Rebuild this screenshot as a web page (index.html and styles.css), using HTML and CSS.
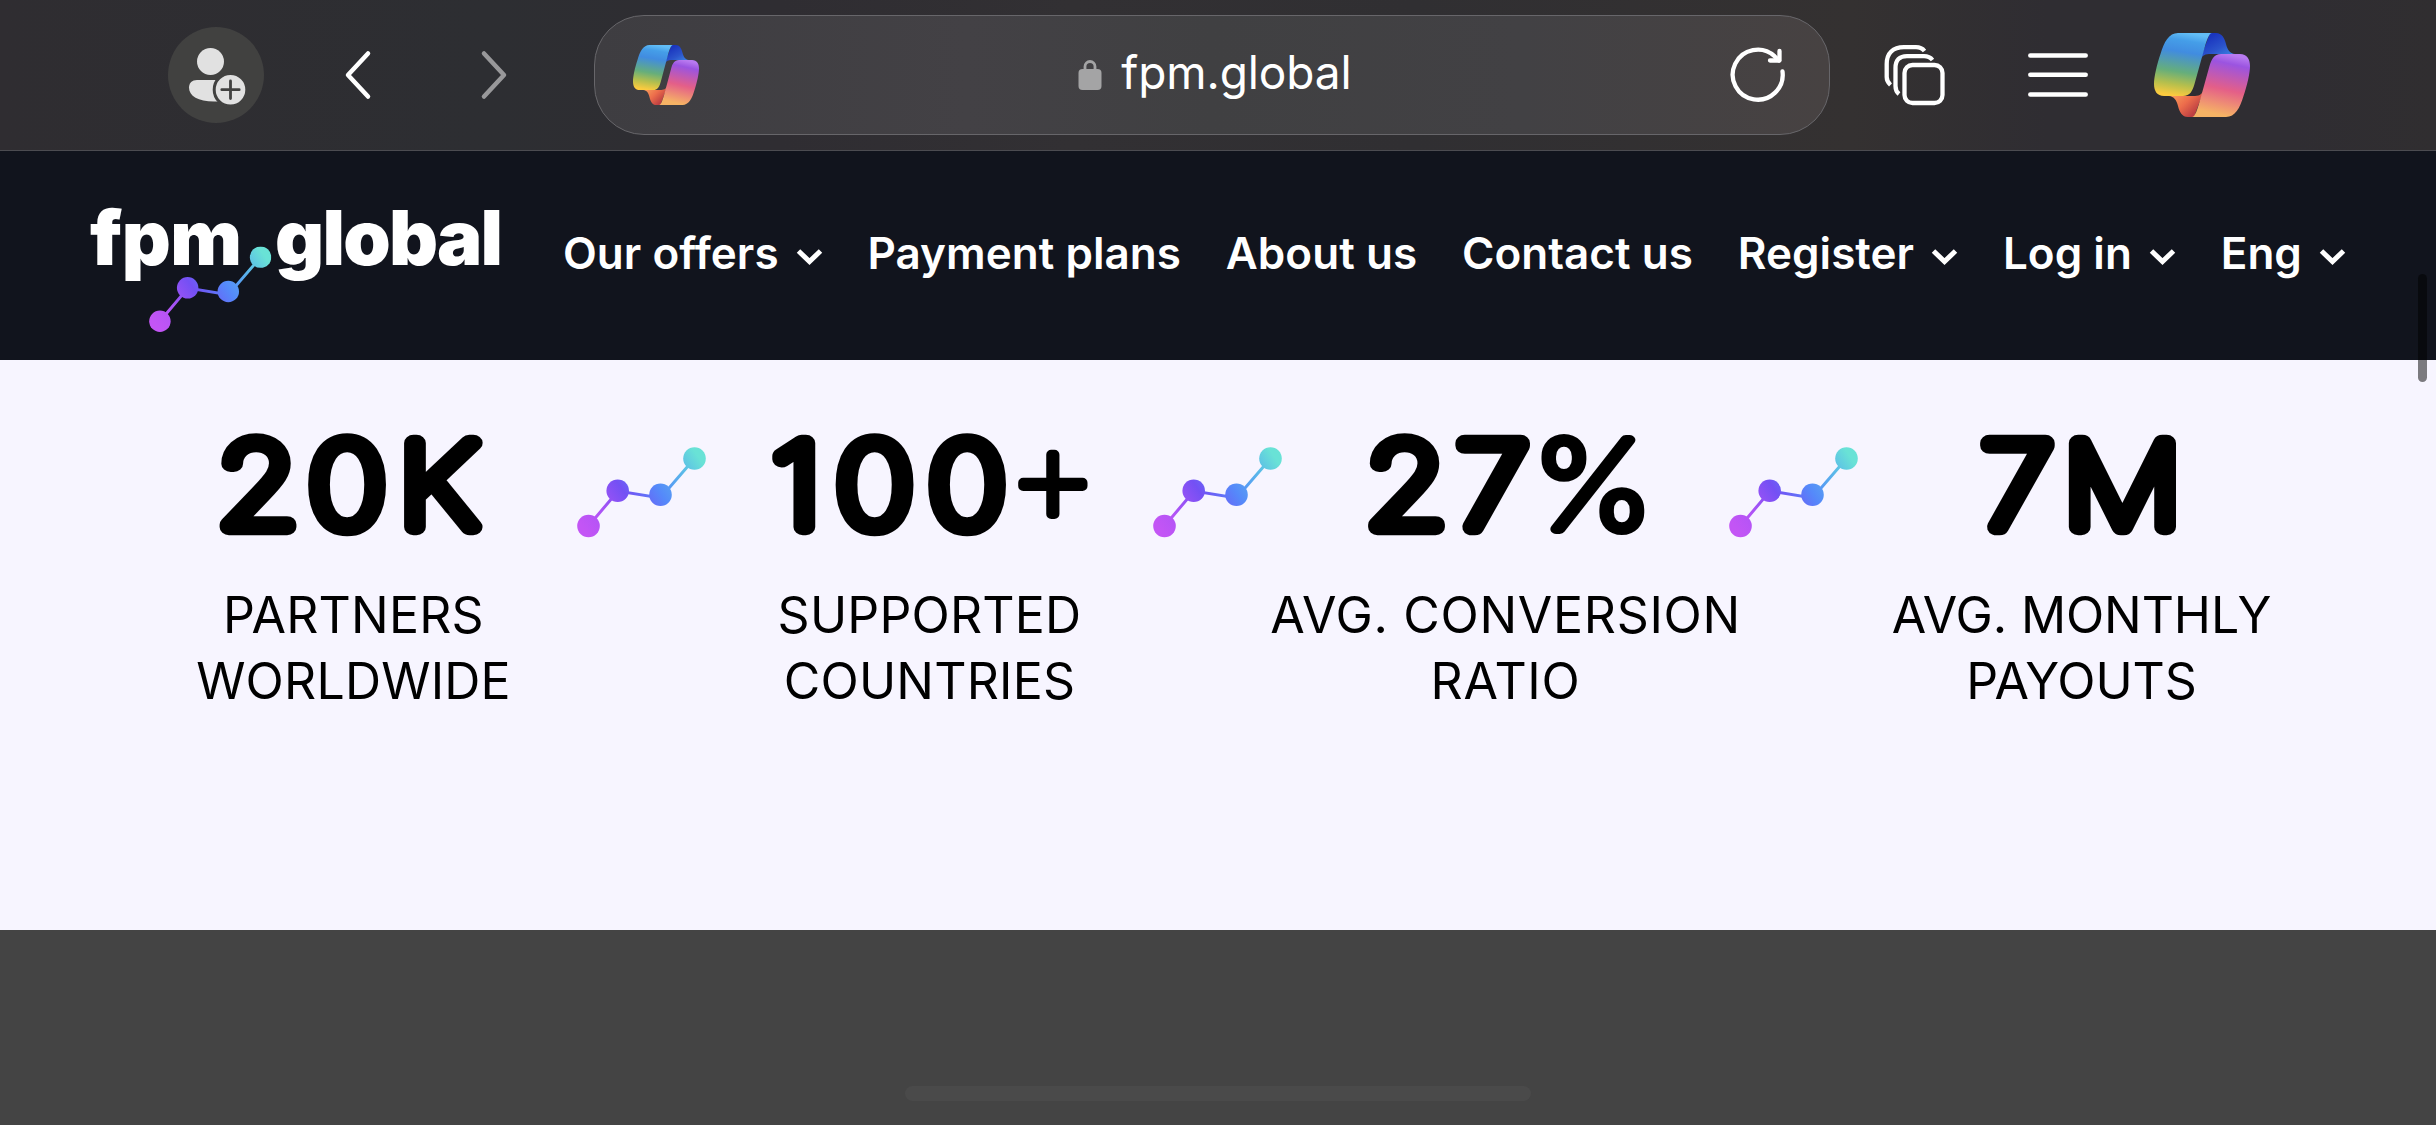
FILE: index.html
```html
<!DOCTYPE html>
<html lang="en">
<head>
  <meta charset="UTF-8">
  <meta name="viewport" content="width=device-width, initial-scale=1.0">
  <title>fpm.global</title>
  <link rel="stylesheet" href="styles.css">
</head>
<body>
  <!-- shared shapes -->
  <svg class="defs" width="0" height="0">
    <defs>
      <linearGradient id="ribbonCool" x1="0.55" y1="0" x2="0.4" y2="1">
        <stop offset="0" stop-color="#62bdf6"/>
        <stop offset="0.12" stop-color="#459ee8"/>
        <stop offset="0.3" stop-color="#418ce0"/>
        <stop offset="0.62" stop-color="#66ae7b"/>
        <stop offset="0.82" stop-color="#b5bf4d"/>
        <stop offset="1" stop-color="#fccb3f"/>
      </linearGradient>
      <linearGradient id="foldCool" x1="0.2" y1="0.2" x2="0.8" y2="1">
        <stop offset="0" stop-color="#1a35bf"/>
        <stop offset="0.5" stop-color="#2b54cb"/>
        <stop offset="1" stop-color="#3f8be6"/>
      </linearGradient>
      <linearGradient id="ribbonWarm" x1="0.6" y1="0" x2="0.4" y2="1">
        <stop offset="0" stop-color="#b87af0"/>
        <stop offset="0.14" stop-color="#9b54e0"/>
        <stop offset="0.55" stop-color="#e45f88"/>
        <stop offset="0.95" stop-color="#f6b365"/>
      </linearGradient>
      <linearGradient id="foldWarm" x1="0.1" y1="0.1" x2="0.85" y2="0.7">
        <stop offset="0" stop-color="#f8a15c"/>
        <stop offset="0.55" stop-color="#ec6c4b"/>
        <stop offset="1" stop-color="#bd3f42"/>
      </linearGradient>
      <symbol id="copilot" viewBox="0 0 96 84" preserveAspectRatio="none">
        <path fill="url(#foldCool)" d="M56 0H62C68 0 70.500 5 72 11C73.500 17 76 20.500 81 21H57C51 21 48.500 22 46 27Z"/>
        <path fill="url(#foldWarm)" d="M40 84H34C28 84 25.500 79 24 73C22.500 67 20 63.500 15 63H39C45 63 47.500 62 50 57Z"/>
        <path fill="url(#ribbonCool)" d="M24 0H58C55 0 52.500 8 50.500 15L40.500 51C38.500 58 36 63 29 63H10C3 63 0 58 0 51C0 44 3 31 6.500 21C10 9 15 0 24 0Z"/>
        <path fill="url(#ribbonWarm)" d="M72 84H38C41 84 43.500 76 45.500 69L55.500 33C57.500 26 60 21 67 21H86C93 21 96 26 96 33C96 40 93 53 89.500 63C86 75 81 84 72 84Z"/>
      </symbol>
      <linearGradient id="line" gradientUnits="userSpaceOnUse" x1="8" y1="84" x2="120" y2="8">
        <stop offset="0" stop-color="#c355f5"/>
        <stop offset="0.15" stop-color="#b354f6"/>
        <stop offset="0.4" stop-color="#7450f4"/>
        <stop offset="0.62" stop-color="#5589fa"/>
        <stop offset="0.85" stop-color="#5bbbe8"/>
        <stop offset="1" stop-color="#69e2d6"/>
      </linearGradient>
      <symbol id="graph" viewBox="0 0 129 92">
        <path d="M11.500 79L41 44L83.500 51L117.500 11.500" fill="none" stroke="url(#line)" stroke-width="3"/>
        <g fill="url(#line)">
          <circle cx="11.500" cy="79" r="11.300"/>
          <circle cx="40.700" cy="43.800" r="11.300"/>
          <circle cx="83.500" cy="47.700" r="11.300"/>
          <circle cx="117.500" cy="11.500" r="11.300"/>
        </g>
      </symbol>
      <symbol id="chevron" viewBox="0 0 27 18">
        <path d="M2.500 3L13.500 13.500L24.500 3" fill="none" stroke="#fff" stroke-width="5"/>
      </symbol>
    </defs>
  </svg>

  <header class="browser">
    <div class="avatar">
      <svg width="96" height="96" viewBox="0 0 96 96">
        <g fill="#e1e1e1">
          <circle cx="42.500" cy="34.500" r="13.500"/>
          <path d="M29 53H55V74.500H46C30 74.500 21 69 21 60.500C21 56 24 53 29 53Z"/>
          <circle cx="62.500" cy="62.700" r="16.300" stroke="#414140" stroke-width="3"/>
        </g>
        <path d="M62.500 54V71.500M53.800 62.700H71.200" stroke="#414140" stroke-width="2.800" stroke-linecap="round"/>
      </svg>
    </div>
    <svg class="back" width="30" height="52" viewBox="0 0 30 52">
      <path d="M25 4.500L5 26L25 47.500" fill="none" stroke="#fff" stroke-width="4.500" stroke-linecap="round" stroke-linejoin="round"/>
    </svg>
    <svg class="forward" width="30" height="52" viewBox="0 0 30 52">
      <path d="M5 4.500L25 26L5 47.500" fill="none" stroke="#98989a" stroke-width="4.500" stroke-linecap="round" stroke-linejoin="round"/>
    </svg>

    <div class="address">
      <svg width="66" height="60"><use href="#copilot"/></svg>
      <div class="url">
        <svg width="24" height="30" viewBox="0 0 24 30">
          <rect x="0.500" y="9" width="23" height="21" rx="4" fill="#a4a4a5"/>
          <path d="M7 11V6.500A5 5 0 0 1 17 6.500V11" fill="none" stroke="#a4a4a5" stroke-width="2.800"/>
        </svg>
        <span>fpm.global</span>
      </div>
      <svg width="60" height="60" viewBox="0 0 60 60">
        <path d="M54.500 26.500A25 25 0 1 1 46.500 11.200L51 15.500" fill="none" stroke="#fff" stroke-width="4.300" stroke-linecap="round"/>
        <path d="M51.500 6V15.500H42" fill="none" stroke="#fff" stroke-width="4.300" stroke-linecap="round" stroke-linejoin="round"/>
      </svg>
    </div>

    <svg class="tabs" width="62" height="62" viewBox="0 0 62 62" fill="none" stroke="#fff" stroke-width="4.300">
      <path d="M6.500 41C3.800 38.500 2.700 36.500 2.700 33V20C2.700 9 9 3.200 20 3.200H32C36 3.200 38.500 4.500 40.500 7"/>
      <path d="M15 50C12.500 48 11.500 45.500 11.500 42V24C11.500 16 15.500 12.200 23 12.200H40C44 12.200 46.500 13.500 48.500 16"/>
      <rect x="20.500" y="21" width="38" height="38" rx="8"/>
    </svg>
    <svg class="menu" width="60" height="46" viewBox="0 0 60 46">
      <path d="M2.300 3.500H57.700M2.300 22.700H57.700M2.300 42.500H57.700" stroke="#fff" stroke-width="4.500" stroke-linecap="round"/>
    </svg>
    <svg class="assistant" width="96" height="84"><use href="#copilot"/></svg>
  </header>

  <nav class="navbar">
    <svg class="logo" width="412" height="144" viewBox="0 0 412 144">
      <g class="logo-text">
        <text x="0" y="72.500" textLength="152">fpm</text>
        <text x="185" y="72.500" textLength="228">global</text>
      </g>
      <svg x="59" y="54.200" width="122.500" height="87.400"><use href="#graph"/></svg>
    </svg>
    <ul class="links">
      <li>Our offers <svg width="27" height="18"><use href="#chevron"/></svg></li>
      <li>Payment plans</li>
      <li>About us</li>
      <li>Contact us</li>
      <li>Register <svg width="27" height="18"><use href="#chevron"/></svg></li>
      <li>Log in <svg width="27" height="18"><use href="#chevron"/></svg></li>
      <li>Eng <svg width="27" height="18"><use href="#chevron"/></svg></li>
    </ul>
  </nav>

  <main class="stats">
    <div class="stat">
      <svg class="number" width="320" height="120">
        <text class="wide" y="101.500" x="20 100 179.500">20K</text>
      </svg>
      <p>PARTNERS<br>WORLDWIDE</p>
    </div>
    <svg class="graph" width="129" height="92"><use href="#graph"/></svg>
    <div class="stat">
      <svg class="number" width="320" height="120">
        <text class="wide" y="101.500" x="2 57.500 138.500">100</text>
        <text class="plus" x="237" y="100">+</text>
      </svg>
      <p>SUPPORTED<br>COUNTRIES</p>
    </div>
    <svg class="graph" width="129" height="92"><use href="#graph"/></svg>
    <div class="stat">
      <svg class="number" width="320" height="120">
        <text class="wide" y="101.500" x="17 97">27</text>
        <text class="wide percent" x="164.500" y="103.500">%</text>
      </svg>
      <p class="conversion">AVG. CONVERSION<br>RATIO</p>
    </div>
    <svg class="graph" width="129" height="92"><use href="#graph"/></svg>
    <div class="stat">
      <svg class="number" width="320" height="120">
        <text class="wide" y="101.500" x="52 124">7M</text>
      </svg>
      <p class="monthly">AVG. MONTHLY<br>PAYOUTS</p>
    </div>
  </main>

  <footer class="bottom">
    <div class="home-bar"></div>
  </footer>

  <div class="scrollbar"></div>
</body>
</html>
```
FILE: styles.css
```css
* {
  margin: 0;
  padding: 0;
  box-sizing: border-box;
}
body {
  width: 2436px;
  height: 1125px;
  overflow: hidden;
  position: relative;
  font-family: Inter, "Open Sans", sans-serif;
  background-color: #f7f5ff;
}
svg {
  display: block;
  flex: none;
}
.defs {
  position: absolute;
}

/* browser toolbar */
.browser {
  display: flex;
  align-items: center;
  height: 151px;
  padding-left: 168px;
  border-bottom: 1px solid #4c4c51;
  background: linear-gradient(90deg, #2f2d31 0%, #2d2e32 20%, #2f2d32 32%, #323033 44%, #302f32 58%, #343131 76%, #2f2d32 84%, #2f2d32 94%, #302e30 100%);
}
.avatar {
  width: 96px;
  height: 96px;
  border-radius: 50%;
  background-color: #414140;
}
.back {
  margin-left: 79px;
}
.forward {
  margin-left: 106px;
}
.address {
  display: flex;
  align-items: center;
  justify-content: space-between;
  width: 1236px;
  height: 120px;
  margin-left: 85px;
  padding: 0 41px 0 38px;
  border: 1.500px solid #67666a;
  border-radius: 50px;
  background: linear-gradient(90deg, #3e3d41 0%, #434145 30%, #404042 50%, #424144 75%, #474242 100%);
}
.url {
  display: flex;
  align-items: center;
  gap: 19px;
  margin-left: 3px;
  color: #fff;
  font-size: 46px;
  line-height: 60px;
  letter-spacing: -0.100px;
}
.url span {
  margin-top: -7px;
}
.tabs {
  margin-left: 54px;
}
.menu {
  margin-left: 82px;
}
.assistant {
  margin-left: 66px;
}

/* site navigation */
.navbar {
  display: flex;
  align-items: center;
  height: 209px;
  padding: 0 90px;
  background-color: #11141d;
}
.logo {
  margin-top: 17px;
  overflow: visible;
}
.logo-text {
  fill: #fff;
  font-size: 76px;
  font-weight: 900;
}
.links {
  display: flex;
  flex: 1;
  justify-content: space-between;
  margin: -5px 0 0 61px;
  list-style: none;
  color: #fff;
  font-size: 44px;
  font-weight: 600;
  line-height: 60px;
  letter-spacing: 0.050px;
}
.links li {
  display: flex;
  align-items: center;
  white-space: nowrap;
}
.links svg {
  margin: 7px 0 0 17px;
}

/* numbers */
.stats {
  display: flex;
  height: 570px;
  padding: 65px 0 0 130px;
  background-color: #f7f5ff;
}
.stat {
  display: flex;
  flex-direction: column;
  align-items: center;
  width: 447px;
}
.number {
  overflow: visible;
}
.number text {
  font-size: 116px;
  font-weight: 100;
  stroke: #000;
  stroke-width: 16.500px;
  stroke-linejoin: round;
}
.number .wide {
  transform: scaleX(1.14);
}
.number .percent {
  font-size: 123px;
  stroke-width: 10px;
}
.number .plus {
  font-size: 144px;
  stroke-width: 10px;
}
.stat p {
  margin-top: 37px;
  font-size: 50px;
  line-height: 66px;
  letter-spacing: 0.200px;
  text-align: center;
  white-space: nowrap;
}
.stat .conversion {
  letter-spacing: 0.700px;
}
.stat .monthly {
  letter-spacing: -0.100px;
}
.graph {
  margin-top: 22px;
}

.bottom {
  display: flex;
  justify-content: center;
  align-items: flex-end;
  height: 195px;
  padding-bottom: 24px;
  background-color: #444;
}
.home-bar {
  width: 626px;
  height: 15px;
  border-radius: 8px;
  background-color: #4a4a4a;
}
.scrollbar {
  position: absolute;
  top: 274px;
  right: 9px;
  width: 9px;
  height: 108px;
  border-radius: 5px;
  background-color: rgba(0, 0, 0, 0.5);
}
```
